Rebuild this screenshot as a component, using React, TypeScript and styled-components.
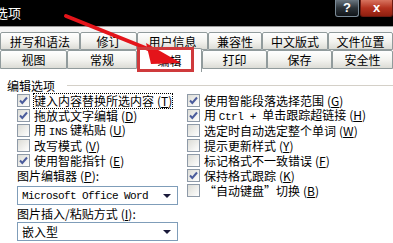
import React from "react";
import styled, { createGlobalStyle } from "styled-components";

const GlobalStyle = createGlobalStyle`
  html, body { margin: 0; padding: 0; width: 393px; height: 243px; overflow: hidden; background: #fff; }
  body { font-family: "Noto Sans CJK SC", "Noto Sans", sans-serif; font-size: 12px; color: #000; }
`;

const Window = styled.div`
  position: relative;
  width: 393px;
  height: 243px;
  overflow: hidden;
  background: #fff;
`;

const TitleBar = styled.div`
  height: 26px;
  background: #000;
  display: flex;
  justify-content: space-between;
  align-items: flex-start;
`;

const TitleText = styled.div`
  color: #fff;
  font-size: 13px;
  line-height: 26px;
  margin-left: -5px;
`;

const CaptionButtons = styled.div`
  display: flex;
  gap: 1px;
`;

const CaptionButton = styled.div<{ $close?: boolean }>`
  width: ${(p) => (p.$close ? "33px" : "24px")};
  height: 17px;
  box-sizing: border-box;
  border: 1px solid ${(p) => (p.$close ? "#6b1a12" : "#7a8a96")};
  border-top: none;
  border-radius: 0 0 3px 3px;
  background: ${(p) =>
    p.$close
      ? "linear-gradient(#d8735f, #b4321f 50%, #8e1f10)"
      : "linear-gradient(#6a7680, #2c343a 50%, #101418)"};
  color: #fff;
  font-family: "Liberation Sans", Arial, sans-serif;
  font-weight: bold;
  font-size: 13px;
  line-height: 16px;
  text-align: center;
`;

const Gap = styled.div`
  height: 6px;
  background: #f4f4f4;
  border-top: 1px solid #9a9a9a;
  box-sizing: border-box;
`;

const TabRow = styled.div<{ $h: number }>`
  display: flex;
  height: ${(p) => p.$h}px;
  align-items: flex-end;
  background: #fff;
`;

const Tab = styled.div<{ $w: number; $sel?: boolean }>`
  width: ${(p) => p.$w}px;
  height: ${(p) => (p.$sel ? "24px" : "100%")};
  box-sizing: border-box;
  border: 1px solid #919b9c;
  border-bottom: ${(p) => (p.$sel ? "none" : "1px solid #919b9c")};
  border-radius: 2px 2px 0 0;
  background: ${(p) => (p.$sel ? "#fff" : "linear-gradient(#ffffff, #f2f2ee 55%, #dcdcd6)")};
  display: flex;
  align-items: center;
  justify-content: center;
  font-size: 12px;
  line-height: 14px;
  padding-top: 1px;
  align-self: flex-end;
  margin-bottom: ${(p) => (p.$sel ? "-3px" : "0")};
  position: relative;
  z-index: ${(p) => (p.$sel ? 1 : 0)};
`;

const Content = styled.div`
  padding: 9px 0 0 7px;
  background: #fff;
`;

const SectionHeader = styled.div`
  display: flex;
  align-items: center;
  line-height: 15px;
  height: 15px;
  &::after {
    content: "";
    flex: 1;
    height: 1px;
    background: #d4d0c8;
    margin-left: 12px;
  }
`;

const OptionsGrid = styled.div`
  display: grid;
  grid-template-columns: 170px 1fr;
  padding-left: 10px;
`;

const Column = styled.div`
  display: flex;
  flex-direction: column;
`;

const CheckRow = styled.div`
  display: flex;
  align-items: center;
  height: 15px;
  gap: 4px;
  white-space: nowrap;
`;

const Box = styled.span<{ $on: boolean }>`
  width: 13px;
  height: 13px;
  box-sizing: border-box;
  border: 1px solid #8e9aa8;
  background: linear-gradient(135deg, #dcdcd6, #ffffff);
  display: inline-flex;
  align-items: center;
  justify-content: center;
  flex: none;
`;

const Label = styled.span<{ $focus?: boolean }>`
  line-height: 14px;
  outline: ${(p) => (p.$focus ? "1px dotted #000" : "none")};
  outline-offset: 0px;
`;

const Mono = styled.span`
  font-family: "Liberation Mono", "DejaVu Sans Mono", monospace;
  font-size: 11px;
  letter-spacing: -0.4px;
`;

const KeyWrap = styled.span`
  padding-left: 3px;
`;

const KeyLetter = styled.span`
  text-decoration: underline;
`;

const Mn = ({ k }: { k: string }) => (
  <KeyWrap>
    (<KeyLetter>{k}</KeyLetter>)
  </KeyWrap>
);

const FieldLabel = styled.div<{ $h: number }>`
  height: ${(p) => p.$h}px;
  display: flex;
  align-items: center;
  white-space: nowrap;
`;

const Dropdown = styled.div<{ $mt: number }>`
  width: 161px;
  height: 19px;
  box-sizing: border-box;
  border: 1px solid #7f9db9;
  display: flex;
  align-items: center;
  justify-content: space-between;
  padding: 0 6px 0 4px;
  background: #fff;
  margin-top: ${(p) => p.$mt}px;
`;

const DropText = styled.span<{ $mono?: boolean }>`
  font-family: ${(p) =>
    p.$mono ? `"Liberation Mono", "DejaVu Sans Mono", monospace` : `"Noto Sans CJK SC", sans-serif`};
  font-size: ${(p) => (p.$mono ? "11px" : "12px")};
  letter-spacing: ${(p) => (p.$mono ? "-0.6px" : "0")};
`;

const Caret = styled.span`
  width: 0;
  height: 0;
  border-left: 4px solid transparent;
  border-right: 4px solid transparent;
  border-top: 4px solid #1a1a3a;
`;

const Overlay = styled.svg`
  position: absolute;
  left: 0;
  top: 0;
  pointer-events: none;
  z-index: 5;
`;

const Check = () => (
  <svg width="11" height="11" viewBox="0 0 11 11">
    <path d="M2 5.5 L4.3 8 L9 2.5" fill="none" stroke="#4b5c9c" strokeWidth="2" />
  </svg>
);

const CB = ({ on, children, focus }: { on: boolean; children: React.ReactNode; focus?: boolean }) => (
  <CheckRow>
    <Box $on={on}>{on && <Check />}</Box>
    <Label $focus={focus}>{children}</Label>
  </CheckRow>
);

const row1 = [
  { t: "拼写和语法", w: 80 },
  { t: "修订", w: 57 },
  { t: "用户信息", w: 71 },
  { t: "兼容性", w: 54 },
  { t: "中文版式", w: 66 },
  { t: "文件位置", w: 65 },
];
const row2 = [
  { t: "视图", w: 67 },
  { t: "常规", w: 70 },
  { t: "编辑", w: 65, sel: true },
  { t: "打印", w: 65 },
  { t: "保存", w: 65 },
  { t: "安全性", w: 61 },
];

export default function App() {
  return (
    <Window>
      <GlobalStyle />
      <TitleBar>
        <TitleText>选项</TitleText>
        <CaptionButtons>
          <CaptionButton>?</CaptionButton>
          <CaptionButton $close>x</CaptionButton>
        </CaptionButtons>
      </TitleBar>
      <Gap />
      <TabRow $h={18}>
        {row1.map((t) => (
          <Tab key={t.t} $w={t.w}>
            {t.t}
          </Tab>
        ))}
      </TabRow>
      <TabRow $h={19}>
        {row2.map((t) => (
          <Tab key={t.t} $w={t.w} $sel={t.sel}>
            {t.t}
          </Tab>
        ))}
      </TabRow>
      <Content>
        <SectionHeader>编辑选项</SectionHeader>
        <OptionsGrid>
          <Column>
            <CB on focus>
              键入内容替换所选内容<Mn k="T" />
            </CB>
            <CB on>
              拖放式文字编辑<Mn k="D" />
            </CB>
            <CB on={false}>
              用 <Mono>INS</Mono> 键粘贴<Mn k="U" />
            </CB>
            <CB on={false}>
              改写模式<Mn k="V" />
            </CB>
            <CB on>
              使用智能指针<Mn k="E" />
            </CB>
            <FieldLabel $h={15}>
              图片编辑器<Mn k="P" />:
            </FieldLabel>
            <Dropdown $mt={3}>
              <DropText $mono>Microsoft Office Word</DropText>
              <Caret />
            </Dropdown>
            <FieldLabel $h={17}>
              图片插入/粘贴方式<Mn k="I" />:
            </FieldLabel>
            <Dropdown $mt={0}>
              <DropText>嵌入型</DropText>
              <Caret />
            </Dropdown>
          </Column>
          <Column>
            <CB on>
              使用智能段落选择范围<Mn k="G" />
            </CB>
            <CB on>
              用 <Mono>Ctrl + </Mono>单击跟踪超链接<Mn k="H" />
            </CB>
            <CB on={false}>
              选定时自动选定整个单词<Mn k="W" />
            </CB>
            <CB on={false}>
              提示更新样式<Mn k="Y" />
            </CB>
            <CB on={false}>
              标记格式不一致错误<Mn k="F" />
            </CB>
            <CB on>
              保持格式跟踪<Mn k="K" />
            </CB>
            <CB on={false}>
              “自动键盘”切换<Mn k="B" />
            </CB>
          </Column>
        </OptionsGrid>
      </Content>
      <Overlay width="393" height="243" viewBox="0 0 393 243">
        <line x1="66" y1="16" x2="158" y2="53" stroke="#e4141a" strokeWidth="4" strokeLinecap="round" />
        <polygon points="181,63 146,43 151,64" fill="#e4141a" />
        <rect x="138.5" y="48.5" width="54" height="22" fill="none" stroke="#cf3a3c" strokeWidth="3" />
      </Overlay>
    </Window>
  );
}
